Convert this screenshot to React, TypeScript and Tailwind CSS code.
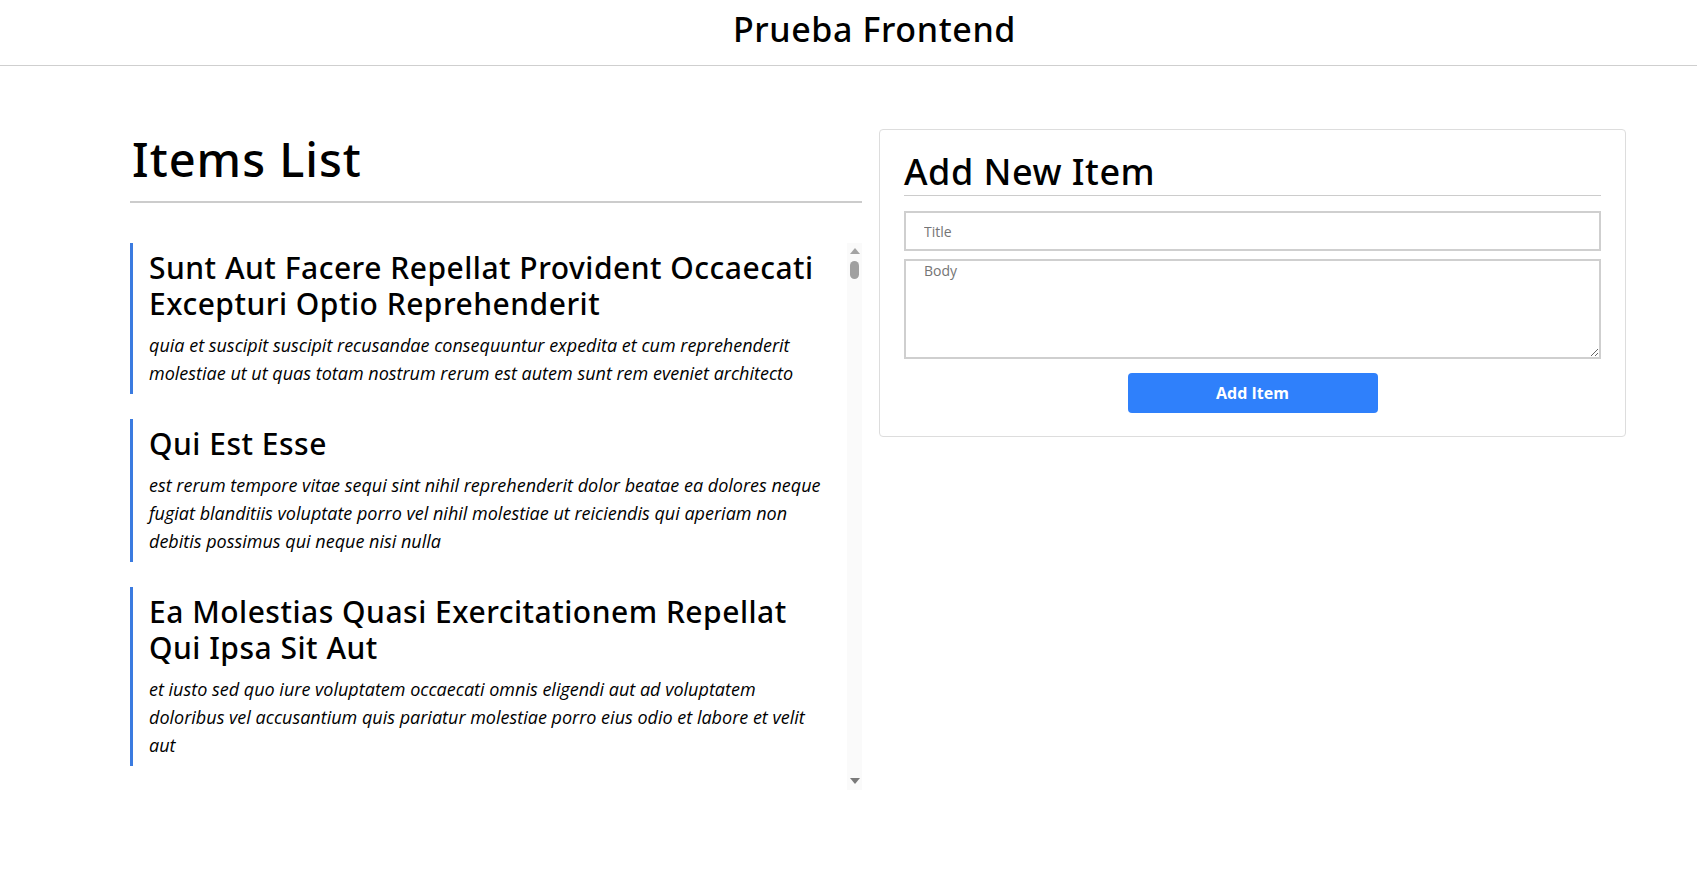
import React from "react";

type Post = { id: number; title: string; body: string };

const basePosts: Omit<Post, "id">[] = [
  {
    title: "sunt aut facere repellat provident occaecati excepturi optio reprehenderit",
    body: "quia et suscipit suscipit recusandae consequuntur expedita et cum reprehenderit molestiae ut ut quas totam nostrum rerum est autem sunt rem eveniet architecto",
  },
  {
    title: "qui est esse",
    body: "est rerum tempore vitae sequi sint nihil reprehenderit dolor beatae ea dolores neque fugiat blanditiis voluptate porro vel nihil molestiae ut reiciendis qui aperiam non debitis possimus qui neque nisi nulla",
  },
  {
    title: "ea molestias quasi exercitationem repellat qui ipsa sit aut",
    body: "et iusto sed quo iure voluptatem occaecati omnis eligendi aut ad voluptatem doloribus vel accusantium quis pariatur molestiae porro eius odio et labore et velit aut",
  },
  {
    title: "eum et est occaecati",
    body: "ullam et saepe reiciendis voluptatem adipisci sit amet autem assumenda provident rerum culpa quis hic commodi nesciunt rem tenetur doloremque ipsam iure quis sunt voluptatem rerum illo velit",
  },
  {
    title: "nesciunt quas odio",
    body: "repudiandae veniam quaerat sunt sed alias aut fugiat sit autem sed est voluptatem omnis possimus esse voluptatibus quis est aut tenetur dolor neque",
  },
  {
    title: "dolorem eum magni eos aperiam quia",
    body: "ut aspernatur corporis harum nihil quis provident sequi mollitia nobis aliquid molestiae perspiciatis et ea nemo ab reprehenderit accusantium quas voluptate dolores velit et doloremque molestiae",
  },
  {
    title: "magnam facilis autem",
    body: "dolore placeat quibusdam ea quo vitae magni quis enim qui quis quo nemo aut saepe quidem repellat excepturi ut quia sunt ut sequi eos ea sed quas",
  },
  {
    title: "dolorem dolore est ipsam",
    body: "dignissimos aperiam dolorem qui eum facilis quibusdam animi sint suscipit qui sint possimus cum quaerat magni maiores excepturi ipsam ut commodi dolor voluptatum modi aut vitae",
  },
  {
    title: "nesciunt iure omnis dolorem tempora et accusantium",
    body: "consectetur animi nesciunt iure dolore enim quia ad veniam autem ut quam aut nobis et est aut quod aut provident voluptas autem voluptas",
  },
  {
    title: "optio molestias id quia eum",
    body: "quo et expedita modi cum officia vel magni doloribus qui repudiandae vero nisi sit quos veniam quod sed accusamus veritatis error",
  },
];

const posts: Post[] = Array.from({ length: 100 }, (_, i) => ({
  id: i + 1,
  ...basePosts[i % basePosts.length],
}));

const headFont = { fontFamily: '"Noto Sans", "Open Sans", sans-serif' };

function FakeScrollbar() {
  return (
    <div className="absolute top-0 right-0 bottom-0 w-[15px] bg-[#fafafa] flex flex-col items-center pointer-events-none">
      <svg width="10" height="7" viewBox="0 0 10 7" className="mt-[5px]">
        <path d="M5 0 L10 6 L0 6 Z" fill="#a3a3a3" />
      </svg>
      <div className="mt-[6px] w-[9px] h-[18px] rounded-full bg-[#a0a0a0]" />
      <div className="flex-1" />
      <svg width="10" height="7" viewBox="0 0 10 7" className="mb-[5px]">
        <path d="M0 0 L10 0 L5 6 Z" fill="#7a7a7a" />
      </svg>
    </div>
  );
}

export default function App() {
  return (
    <div className="min-h-screen bg-white text-black" style={{ fontFamily: '"Open Sans", sans-serif' }}>
      <header className="h-[66px] border-b border-[#cfcfcf] pl-[130px] pr-[78px] pb-[7px] flex items-center justify-center">
        <h1 className="text-[34px] leading-[44px] tracking-[0.6px] font-medium" style={headFont}>
          Prueba Frontend
        </h1>
      </header>

      <main className="pl-[130px] pr-[71px] pt-[63px] flex gap-[17px] items-start">
        <section className="w-[732px] shrink-0">
          <h2
            className="text-[47px] leading-[60px] font-medium tracking-[1px] pl-[2px] pb-[12px] border-b-2 border-[#cccccc]"
            style={headFont}
          >
            Items List
          </h2>
          <div className="relative mt-[40px] h-[547px]">
            <div className="h-full overflow-y-auto [scrollbar-width:none] pr-[34px]">
              <ul className="flex flex-col gap-[25px]">
                {posts.map((p) => (
                  <li key={p.id} className="border-l-[3px] border-[#3b7be0] pl-[16px] py-[7px]">
                    <h3
                      className="text-[30px] leading-[36px] font-medium capitalize tracking-[0.5px] mb-[9px]"
                      style={headFont}
                    >
                      {p.title}
                    </h3>
                    <p className="italic text-[18px] leading-[28px]">{p.body}</p>
                  </li>
                ))}
              </ul>
            </div>
            <FakeScrollbar />
          </div>
        </section>

        <section className="w-[747px] shrink-0 border border-[#dddddd] rounded-[4px] px-[24px] pt-[20px] pb-[23px]">
          <h2
            className="text-[36px] leading-[44px] font-medium tracking-[0.5px] pb-[1px] border-b border-[#cccccc]"
            style={headFont}
          >
            Add New Item
          </h2>
          <form className="mt-[15px] flex flex-col" onSubmit={(e) => e.preventDefault()}>
            <input
              type="text"
              placeholder="Title"
              className="h-[40px] border-2 border-[#cfcfcf] px-[18px] text-[14px] outline-none placeholder:text-[#757575]"
            />
            <textarea
              placeholder="Body"
              className="mt-[8px] h-[100px] border-2 border-[#cfcfcf] px-[18px] pt-0 text-[14px] leading-[19px] outline-none placeholder:text-[#757575]"
            />
            <button
              type="submit"
              className="mt-[14px] self-center w-[250px] h-[40px] rounded-[4px] bg-[#2f80fb] text-white font-bold text-[16px]"
            >
              Add Item
            </button>
          </form>
        </section>
      </main>
    </div>
  );
}
